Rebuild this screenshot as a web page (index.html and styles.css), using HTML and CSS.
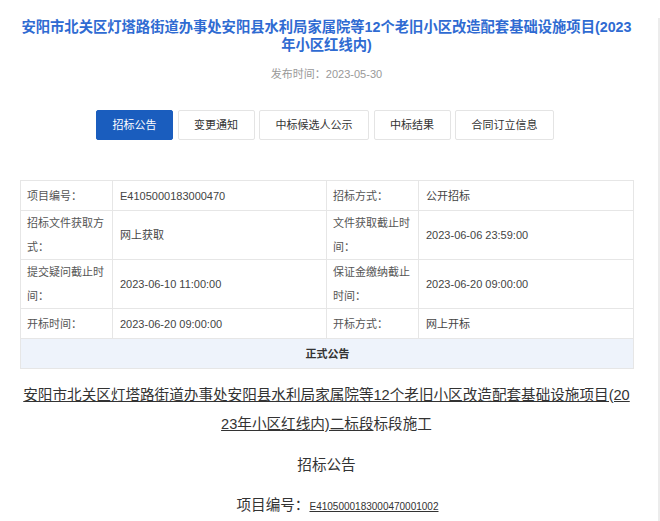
FILE: index.html
```html
<!DOCTYPE html>
<html lang="zh-CN">
<head>
<meta charset="utf-8">
<title>招标公告</title>
<link rel="stylesheet" href="styles.css">
</head>
<body>
<div class="page">
  <h1 class="title">安阳市北关区灯塔路街道办事处安阳县水利局家属院等12个老旧小区改造配套基础设施项目(2023年小区红线内)</h1>
  <div class="date">发布时间：2023-05-30</div>
  <div class="tabs">
    <span class="tab active">招标公告</span>
    <span class="tab">变更通知</span>
    <span class="tab">中标候选人公示</span>
    <span class="tab">中标结果</span>
    <span class="tab">合同订立信息</span>
  </div>
  <table class="info">
    <colgroup>
      <col class="c-label"><col class="c-value"><col class="c-label"><col class="c-value2">
    </colgroup>
    <tr>
      <td class="label">项目编号：</td><td>E4105000183000470</td>
      <td class="label">招标方式：</td><td>公开招标</td>
    </tr>
    <tr>
      <td class="label">招标文件获取方式：</td><td>网上获取</td>
      <td class="label">文件获取截止时间：</td><td>2023-06-06 23:59:00</td>
    </tr>
    <tr>
      <td class="label">提交疑问截止时间：</td><td>2023-06-10 11:00:00</td>
      <td class="label">保证金缴纳截止时间：</td><td>2023-06-20 09:00:00</td>
    </tr>
    <tr>
      <td class="label">开标时间：</td><td>2023-06-20 09:00:00</td>
      <td class="label">开标方式：</td><td>网上开标</td>
    </tr>
    <tr>
      <td class="section" colspan="4">正式公告</td>
    </tr>
  </table>
  <p class="doc-title"><u>安阳市北关区灯塔路街道办事处安阳县水利局家属院等12个老旧小区改造配套基础设施项目(20<br>23年小区红线内)二标段</u>标段施工</p>
  <p class="doc-head">招标公告</p>
  <p class="doc-code">项目编号：<u class="code">E4105000183000470001002</u></p>
</div>
</body>
</html>
```

FILE: styles.css
```css
html, body {
  margin: 0;
  padding: 0;
  background: #fff;
}
body {
  font-family: "Liberation Sans", "Noto Sans CJK SC", sans-serif;
  color: #333;
}
.page {
  width: 613px;
  padding: 0 25px 0 20px;
  min-height: 521px;
  border-right: 2px solid #ececec;
  box-sizing: content-box;
}
.title {
  margin: 18px 0 0;
  font-size: 14.3px;
  line-height: 18px;
  font-weight: bold;
  color: #2f6bd2;
  text-align: center;
}
.date {
  margin-top: 10px;
  font-size: 11px;
  line-height: 20px;
  color: #999;
  text-align: center;
}
.tabs {
  margin-top: 26px;
  display: flex;
  justify-content: center;
  gap: 4.5px;
  padding-right: 3px;
}
.tab {
  display: block;
  padding: 0 15.5px;
  height: 28px;
  line-height: 28px;
  font-size: 11px;
  color: #333;
  background: #fff;
  border: 1px solid #e4e4e4;
  border-radius: 2px;
}
.tab.active {
  background: #1a5dbe;
  border-color: #1a5dbe;
  color: #fff;
}
.info {
  margin-top: 40px;
  width: 613px;
  border-collapse: collapse;
  table-layout: fixed;
  font-size: 11px;
}
.c-label { width: 92px; }
.c-value { width: 214px; }
.c-value2 { width: 215px; }
.info td {
  border: 1px solid #e6e6e6;
  height: 29px;
  padding: 0 6px 0 7px;
  line-height: 24px;
  color: #444;
  vertical-align: middle;
}
.info td.label {
  color: #555;
  padding-left: 6px;
}
.info td.section {
  background: #eef3fb;
  text-align: center;
  font-weight: bold;
  color: #333;
}
.doc-title {
  margin: 12px 0 0;
  font-size: 14.6px;
  line-height: 29px;
  text-align: center;
  color: #333;
}
.doc-head {
  margin: 12px 0 0;
  font-size: 14.6px;
  line-height: 29px;
  text-align: center;
  color: #333;
}
.doc-code {
  margin: 11px 0 0;
  padding-left: 22px;
  font-size: 14.6px;
  line-height: 29px;
  text-align: center;
  color: #333;
}
.code {
  font-size: 10px;
  color: #333;
}
```
